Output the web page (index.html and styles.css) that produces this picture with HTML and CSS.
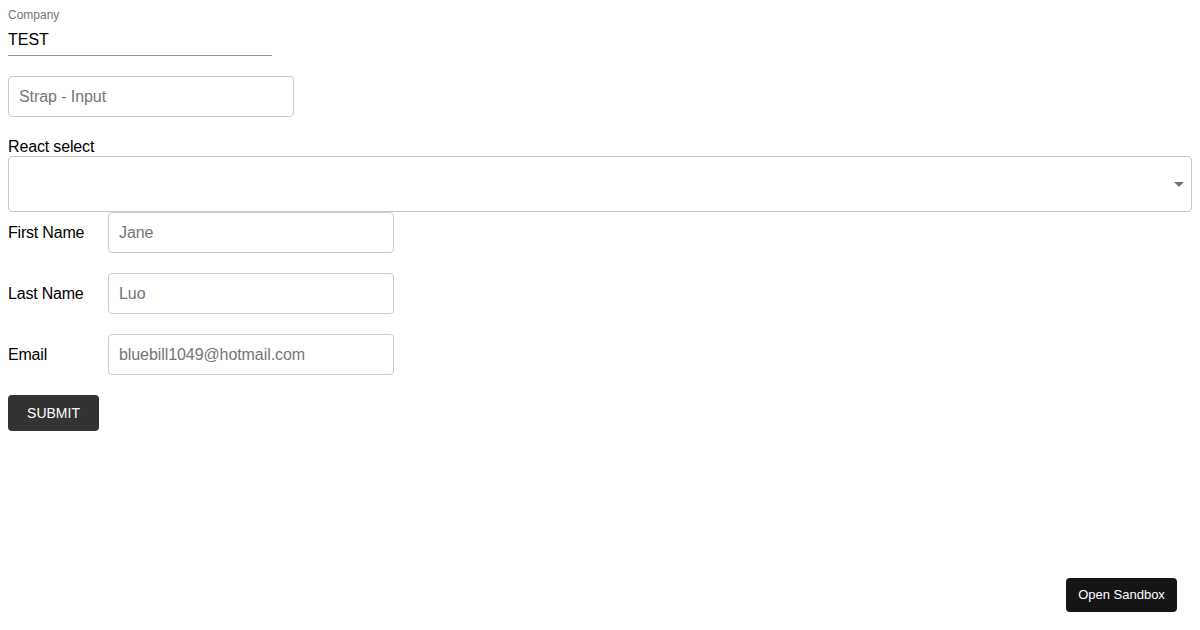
FILE: index.html
```html
<!DOCTYPE html>
<html lang="en">
<head>
<meta charset="utf-8">
<title>Form</title>
<link rel="stylesheet" href="styles.css">
</head>
<body>
<form class="form">
  <div class="mui-field">
    <label class="mui-label">Company</label>
    <div class="mui-input"><input type="text" value="TEST"></div>
  </div>

  <input class="strap-input" type="text" placeholder="Strap - Input">

  <label class="select-label">React select</label>
  <div class="select-box">
    <svg class="select-arrow" viewBox="0 0 24 24" width="24" height="24"><path d="M7 10l5 5 5-5z"/></svg>
  </div>

  <div class="row">
    <label class="row-label">First Name</label>
    <input class="strap-input" type="text" placeholder="Jane">
  </div>
  <div class="row">
    <label class="row-label">Last Name</label>
    <input class="strap-input" type="text" placeholder="Luo">
  </div>
  <div class="row">
    <label class="row-label">Email</label>
    <input class="strap-input" type="text" placeholder="bluebill1049@hotmail.com">
  </div>

  <button class="submit" type="button">Submit</button>
</form>

<button class="sandbox" type="button">Open Sandbox</button>
</body>
</html>
```

FILE: styles.css
```css
* { box-sizing: border-box; }

body {
  margin: 8px;
  font-family: "Liberation Sans", Arial, sans-serif;
  color: #000;
  background: #fff;
}

.form {
  display: flex;
  flex-direction: column;
  align-items: flex-start;
}

.mui-field {
  width: 264px;
  display: flex;
  flex-direction: column;
}

.mui-label {
  font-size: 12px;
  line-height: 14px;
  color: #757575;
  height: 16px;
}

.mui-input {
  border-bottom: 1px solid #949494;
  padding: 6px 0 6px;
}

.mui-input input {
  border: 0;
  outline: 0;
  padding: 0;
  margin: 0;
  font: inherit;
  font-size: 16px;
  height: 19px;
  width: 100%;
  color: #000;
  background: transparent;
}

.strap-input {
  width: 286px;
  height: 41px;
  border: 1px solid #cccccc;
  border-radius: 4px;
  padding: 0 10px;
  font-family: inherit;
  font-size: 16px;
  letter-spacing: -0.08px;
  color: #000;
  margin: 0;
  outline: 0;
}

.strap-input::placeholder {
  color: #757575;
}

.mui-field + .strap-input {
  margin-top: 20px;
}

.select-label {
  margin-top: 19px;
  font-size: 16px;
  letter-spacing: -0.15px;
  height: 20px;
  line-height: 22px;
}

.select-box {
  width: 100%;
  height: 56px;
  border: 1px solid #c4c4c4;
  border-radius: 4px;
  display: flex;
  align-items: center;
  justify-content: flex-end;
}

.select-arrow {
  fill: #757575;
}

.row {
  display: flex;
  align-items: center;
  margin-bottom: 20px;
}

.row-label {
  width: 100px;
  font-size: 16px;
  letter-spacing: -0.2px;
}

.submit {
  width: 91px;
  height: 36px;
  background: #333333;
  color: #fff;
  border: 0;
  border-radius: 4px;
  font-family: inherit;
  font-size: 14px;
  text-transform: uppercase;
  padding: 0;
}

.sandbox {
  position: fixed;
  right: 23px;
  bottom: 18px;
  width: 111px;
  height: 34px;
  background: #151515;
  color: #fff;
  border: 0;
  border-radius: 4px;
  font-family: inherit;
  font-size: 13px;
  padding: 0 0 2px;
}
```
